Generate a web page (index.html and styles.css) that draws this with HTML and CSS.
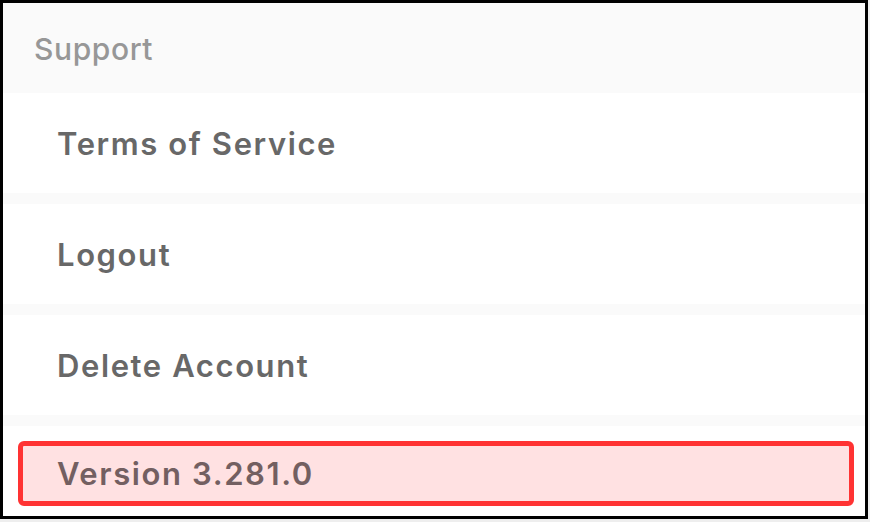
FILE: index.html
```html
<!DOCTYPE html>
<html>
<head>
<meta charset="utf-8">
<link rel="stylesheet" href="styles.css">
</head>
<body>
<div class="frame">
  <div class="section-header"><span class="section-title">Support</span></div>
  <div class="row"><span class="row-label">Terms of Service</span></div>
  <div class="sep"></div>
  <div class="row"><span class="row-label">Logout</span></div>
  <div class="sep"></div>
  <div class="row"><span class="row-label">Delete Account</span></div>
  <div class="sep"></div>
  <div class="version-row">
    <div class="highlight"><span class="row-label">Version 3.281.0</span></div>
  </div>
</div>
</body>
</html>
```

FILE: styles.css
```css
html, body {
  margin: 0;
  padding: 0;
  background: #eeeeee;
}
body {
  width: 870px;
  height: 522px;
  overflow: hidden;
  font-family: Inter, "Liberation Sans", sans-serif;
}
.frame {
  box-sizing: border-box;
  width: 868px;
  height: 519px;
  border: 3px solid #000;
  background: #ffffff;
  overflow: hidden;
  display: flex;
  flex-direction: column;
}
.section-header {
  flex: 0 0 90px;
  background: #fafafa;
  display: flex;
  align-items: center;
  padding-left: 31px;
}
.section-title {
  font-size: 30px;
  font-weight: 500;
  letter-spacing: 0.6px;
  color: #979797;
  padding-top: 2px;
}
.row {
  flex: 0 0 100px;
  display: flex;
  align-items: center;
  padding-left: 54px;
  background: #ffffff;
}
.sep {
  flex: 0 0 11px;
  background: #fafafa;
}
.row-label {
  font-size: 31px;
  font-weight: 600;
  letter-spacing: 1.6px;
  color: #686868;
}
.version-row {
  flex: 0 0 100px;
  padding: 15px 11px 0 15px;
  background: #ffffff;
}
.highlight {
  box-sizing: border-box;
  height: 65px;
  border: 5px solid #ff3333;
  border-radius: 6px;
  background: #ffe1e2;
  display: flex;
  align-items: center;
  padding-left: 34px;
}
.highlight .row-label {
  color: #735f61;
}
```
